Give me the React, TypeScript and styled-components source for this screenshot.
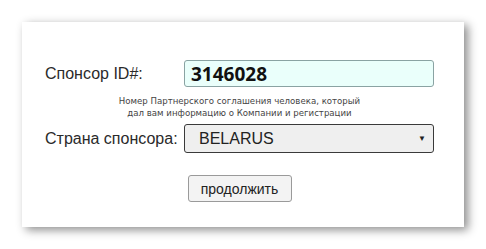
import React from "react";
import styled, { createGlobalStyle } from "styled-components";

const GlobalStyle = createGlobalStyle`
    html, body {
        margin: 0;
        padding: 0;
        background: #ffffff;
    }
    body {
        font-family: "Liberation Sans", Arial, sans-serif;
    }
`;

const Page = styled.div`
    padding: 22px;
`;

const Card = styled.form`
    box-sizing: border-box;
    width: 442px;
    height: 205px;
    background: #ffffff;
    box-shadow: 4px 3px 9px rgba(0, 0, 0, 0.45);
    padding: 38px 0 0 23px;
    display: grid;
    grid-template-columns: 139px 250px;
    align-content: start;
`;

const Label = styled.label`
    font-size: 16px;
    color: #2a2a2a;
    display: flex;
    align-items: center;
`;

const IdInput = styled.input`
    box-sizing: border-box;
    width: 250px;
    height: 27px;
    margin: 0;
    padding: 0 6px;
    border: 1px solid #8aa3a3;
    border-radius: 3px;
    background: #eafffb;
    font-family: "Open Sans", Tahoma, sans-serif;
    font-weight: bold;
    font-size: 19px;
    color: #111;
    outline: none;
`;

const Hint = styled.div`
    grid-column: 1 / 3;
    margin-top: 8px;
    text-align: center;
    font-family: "DejaVu Sans", Verdana, sans-serif;
    font-size: 8.6px;
    line-height: 12px;
    color: #444;
`;

const SelectWrap = styled.div`
    position: relative;
    margin-top: 5px;
    width: 250px;
    height: 29px;
`;

const Select = styled.select`
    box-sizing: border-box;
    appearance: none;
    width: 100%;
    height: 100%;
    margin: 0;
    padding: 0 0 0 14px;
    border: 1px solid #3a3a3a;
    border-radius: 3px;
    background: #efefef;
    font-family: "Liberation Sans", Arial, sans-serif;
    font-size: 16px;
    color: #222;
    outline: none;
`;

const Arrow = styled.span`
    position: absolute;
    right: 8px;
    top: 10px;
    font-size: 8px;
    color: #222;
    pointer-events: none;
`;

const SelectLabel = styled(Label)`
    margin-top: 5px;
`;

const Actions = styled.div`
    grid-column: 1 / 3;
    display: flex;
    justify-content: center;
    margin-top: 22px;
`;

const Button = styled.button`
    box-sizing: border-box;
    width: 104px;
    height: 27px;
    margin: 0;
    padding: 0;
    border: 1px solid #9a9a9a;
    border-radius: 3px;
    background: #f3f3f3;
    font-family: "Liberation Sans", Arial, sans-serif;
    font-size: 14px;
    color: #222;
`;

const App = () => {
    return (
        <>
            <GlobalStyle />
            <Page>
                <Card onSubmit={(e) => e.preventDefault()}>
                    <Label htmlFor="sponsor">Спонсор ID#:</Label>
                    <IdInput id="sponsor" defaultValue="3146028" />
                    <Hint>
                        Номер Партнерского соглашения человека, который
                        <br />
                        дал вам информацию о Компании и регистрации
                    </Hint>
                    <SelectLabel htmlFor="country">Страна спонсора:</SelectLabel>
                    <SelectWrap>
                        <Select id="country" defaultValue="BY">
                            <option value="BY">BELARUS</option>
                        </Select>
                        <Arrow>▼</Arrow>
                    </SelectWrap>
                    <Actions>
                        <Button type="submit">продолжить</Button>
                    </Actions>
                </Card>
            </Page>
        </>
    );
};

export default App;
